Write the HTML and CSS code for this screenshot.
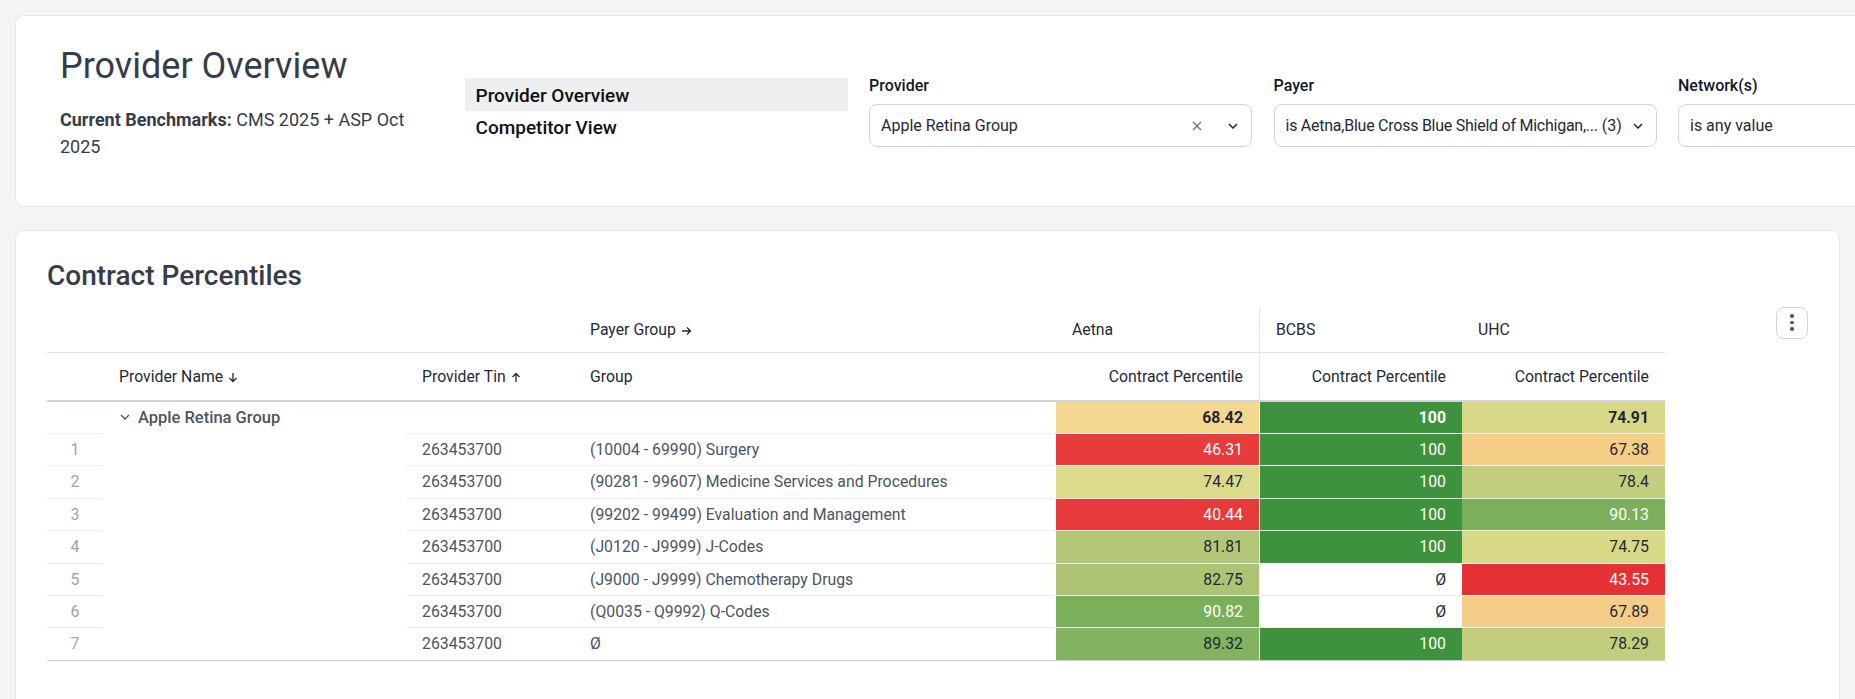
FILE: index.html
```html
<!DOCTYPE html>
<html lang="en">
<head>
    <meta charset="UTF-8">
    <meta name="viewport" content="width=device-width, initial-scale=1.0">
    <title>Provider Overview</title>
    <link rel="stylesheet" href="styles.css">
</head>
<body>
<div class="page">
    <section class="card top-card">
        <div class="top-grid">
            <div class="intro">
                <h1>Provider Overview</h1>
                <p class="benchmarks"><strong>Current Benchmarks:</strong> <span>CMS 2025 + ASP Oct</span> <span>2025</span></p>
            </div>

            <nav class="views">
                <a href="#" class="active">Provider Overview</a>
                <a href="#">Competitor View</a>
            </nav>

            <div class="filter">
                <label>Provider</label>
                <div class="select">
                    <span class="value">Apple Retina Group</span>
                    <svg class="clear" width="10" height="10" viewBox="0 0 10 10"><path d="M1 1L9 9M9 1L1 9" stroke="#6b7280" stroke-width="1.3" fill="none"/></svg>
                    <svg class="caret" width="10" height="6" viewBox="0 0 10 6"><path d="M1 1L5 5L9 1" stroke="#1f2937" stroke-width="1.5" fill="none"/></svg>
                </div>
            </div>

            <div class="filter">
                <label>Payer</label>
                <div class="select">
                    <span class="value tight">is Aetna,Blue Cross Blue Shield of Michigan,...</span>
                    <span class="count">(3)</span>
                    <svg class="caret" width="10" height="6" viewBox="0 0 10 6"><path d="M1 1L5 5L9 1" stroke="#1f2937" stroke-width="1.5" fill="none"/></svg>
                </div>
            </div>

            <div class="filter">
                <label>Network(s)</label>
                <div class="select">
                    <span class="value">is any value</span>
                </div>
            </div>
        </div>
    </section>

    <section class="card percentiles">
        <h2>Contract Percentiles</h2>
        <div class="table-wrap">
            <table class="pivot">
                <colgroup>
                    <col style="width:56px">
                    <col style="width:303px">
                    <col style="width:168px">
                    <col style="width:482px">
                    <col style="width:203px">
                    <col style="width:203px">
                    <col style="width:203px">
                </colgroup>
                <thead>
                    <tr class="pivot-row">
                        <th></th>
                        <th></th>
                        <th></th>
                        <th>Payer Group <svg class="arrow" width="11" height="10" viewBox="0 0 11 10"><path d="M1 5H9.5M6 1.5L9.5 5L6 8.5" stroke="#1f2937" stroke-width="1.3" fill="none"/></svg></th>
                        <th>Aetna</th>
                        <th class="split">BCBS</th>
                        <th>UHC</th>
                    </tr>
                    <tr class="field-row">
                        <th></th>
                        <th>Provider Name <svg class="arrow" width="10" height="11" viewBox="0 0 10 11"><path d="M5 1V9.5M1.5 6L5 9.5L8.5 6" stroke="#1f2937" stroke-width="1.3" fill="none"/></svg></th>
                        <th>Provider Tin <svg class="arrow" width="10" height="11" viewBox="0 0 10 11"><path d="M5 10V1.5M1.5 5L5 1.5L8.5 5" stroke="#1f2937" stroke-width="1.3" fill="none"/></svg></th>
                        <th>Group</th>
                        <th class="num">Contract Percentile</th>
                        <th class="num split">Contract Percentile</th>
                        <th class="num">Contract Percentile</th>
                    </tr>
                </thead>
                <tbody>
                    <tr class="group-row">
                        <td class="idx"></td>
                        <td class="name" rowspan="8"><svg class="chev" width="10" height="6" viewBox="0 0 10 6"><path d="M1 1L5 5L9 1" stroke="#4b5563" stroke-width="1.4" fill="none"/></svg>Apple Retina Group</td>
                        <td></td>
                        <td></td>
                        <td class="num" style="background:#f5d88f">68.42</td>
                        <td class="num split light" style="background:#3e923d">100</td>
                        <td class="num" style="background:#d8d886">74.91</td>
                    </tr>
                    <tr>
                        <td class="idx">1</td>
                        <td>263453700</td>
                        <td>(10004 - 69990) Surgery</td>
                        <td class="num light" style="background:#e83b3c">46.31</td>
                        <td class="num split light" style="background:#3e923d">100</td>
                        <td class="num" style="background:#f4cd86">67.38</td>
                    </tr>
                    <tr>
                        <td class="idx">2</td>
                        <td>263453700</td>
                        <td>(90281 - 99607) Medicine Services and Procedures</td>
                        <td class="num" style="background:#dcdb8c">74.47</td>
                        <td class="num split light" style="background:#3e923d">100</td>
                        <td class="num" style="background:#c3cf7f">78.4</td>
                    </tr>
                    <tr>
                        <td class="idx">3</td>
                        <td>263453700</td>
                        <td>(99202 - 99499) Evaluation and Management</td>
                        <td class="num light" style="background:#e73a3b">40.44</td>
                        <td class="num split light" style="background:#3e923d">100</td>
                        <td class="num light" style="background:#7caf5c">90.13</td>
                    </tr>
                    <tr>
                        <td class="idx">4</td>
                        <td>263453700</td>
                        <td>(J0120 - J9999) J-Codes</td>
                        <td class="num" style="background:#b3c778">81.81</td>
                        <td class="num split light" style="background:#3e923d">100</td>
                        <td class="num" style="background:#d8d986">74.75</td>
                    </tr>
                    <tr>
                        <td class="idx">5</td>
                        <td>263453700</td>
                        <td>(J9000 - J9999) Chemotherapy Drugs</td>
                        <td class="num" style="background:#aec475">82.75</td>
                        <td class="num split">Ø</td>
                        <td class="num light" style="background:#e53134">43.55</td>
                    </tr>
                    <tr>
                        <td class="idx">6</td>
                        <td>263453700</td>
                        <td>(Q0035 - Q9992) Q-Codes</td>
                        <td class="num light" style="background:#7bb05b">90.82</td>
                        <td class="num split">Ø</td>
                        <td class="num" style="background:#f4ce88">67.89</td>
                    </tr>
                    <tr>
                        <td class="idx">7</td>
                        <td>263453700</td>
                        <td>Ø</td>
                        <td class="num" style="background:#83b260">89.32</td>
                        <td class="num split light" style="background:#3e923d">100</td>
                        <td class="num" style="background:#c2ce7e">78.29</td>
                    </tr>
                </tbody>
            </table>
            <button class="more" type="button"><span></span><span></span><span></span></button>
        </div>
    </section>
</div>
</body>
</html>
```

FILE: styles.css
```css
body {
    margin: 0;
    font-family: Roboto, 'Noto Sans', sans-serif;
    background-color: #f3f4f6;
    color: #374151;
}

.page {
    padding: 15px;
    overflow: hidden;
}

.card {
    background: #fff;
    border: 1px solid #e5e7eb;
    border-radius: 8px;
}

/* header card */

.top-card {
    width: max-content;
    height: 192px;
    box-sizing: border-box;
    padding: 27px 44px 0 44px;
}

.top-grid {
    display: grid;
    grid-template-columns: repeat(5, 383px);
    column-gap: 21.5px;
}

.intro h1 {
    margin: 2px 0 0;
    font-size: 36px;
    line-height: 43px;
    font-weight: 400;
    color: #363c48;
}

.benchmarks {
    margin: 18px 0 0;
    font-size: 18px;
    line-height: 27px;
    color: #363c48;
}

.benchmarks strong {
    font-weight: 700;
}

.views {
    margin-top: 35px;
    display: flex;
    flex-direction: column;
}

.views a {
    display: block;
    padding: 6.5px 11px 3.5px;
    line-height: 22.5px;
    font-size: 19px;
    font-weight: 500;
    color: #111;
    text-decoration: none;
}

.views a.active {
    background: #eeeff1;
}

.filter {
    margin-top: 33px;
}

.filter label {
    display: block;
    font-size: 16px;
    line-height: 19px;
    font-weight: 500;
    color: #111827;
    margin-bottom: 9px;
}

.select {
    display: flex;
    align-items: center;
    height: 43px;
    box-sizing: border-box;
    border: 1px solid #d1d5db;
    border-radius: 8px;
    padding: 0 13px 0 11px;
    font-size: 16px;
    color: #1f2937;
}

.select .value {
    flex: 1;
    white-space: nowrap;
    overflow: hidden;
}

.select .value.tight {
    flex: none;
    letter-spacing: -0.25px;
    overflow: visible;
}

.select .count {
    margin-left: 4px;
    white-space: nowrap;
}

.select .count + .caret {
    margin-left: auto;
}

.select .clear {
    margin-right: 26px;
}

/* percentiles card */

.percentiles {
    margin-top: 23px;
    padding: 27.5px 31px 60px 31px;
}

.percentiles h2 {
    margin: 0 0 14px;
    font-size: 28px;
    line-height: 34px;
    font-weight: 500;
    color: #363c48;
}

.table-wrap {
    display: flex;
    align-items: flex-start;
}

.pivot {
    width: 1618px;
    table-layout: fixed;
    border-collapse: separate;
    border-spacing: 0;
    font-size: 15.8px;
}

.pivot th, .pivot td {
    padding: 0 16px;
    text-align: left;
    white-space: nowrap;
    overflow: hidden;
}

.pivot th {
    font-weight: 400;
    color: #1f2937;
}

.pivot-row th {
    line-height: 45px;
    border-bottom: 1px solid #e5e7eb;
}

.field-row th {
    line-height: 47px;
    border-bottom: 2px solid #d1d5db;
}

.pivot th.split {
    border-left: 1px solid #e5e7eb;
}

.pivot .arrow {
    vertical-align: -1px;
    margin-left: 1px;
}

.pivot td {
    line-height: 31.4px;
    border-bottom: 1px solid #eceef1;
    color: #4b5563;
}

.pivot tbody tr:last-child td, .pivot td.name {
    border-bottom-color: #c9cdd3;
}

.pivot td.split {
    border-left: 1px solid #eef0f2;
}

.pivot td.idx {
    text-align: center;
    color: #9ca3af;
    padding: 0;
}

.pivot td.name {
    vertical-align: top;
    font-size: 16.5px;
    font-weight: 500;
    color: #4b5563;
}

.pivot .chev {
    margin: 0 8px 0 1px;
    vertical-align: 3px;
}

.pivot .num {
    text-align: right;
}

.pivot td.num {
    color: #1f2937;
}

.pivot td.light {
    color: #fff;
}

.group-row td.num {
    font-weight: 700;
}

.more {
    margin-left: auto;
    width: 32px;
    height: 32px;
    padding: 0;
    border: 1px solid #d1d5db;
    border-radius: 8px;
    background: #fff;
    display: flex;
    flex-direction: column;
    align-items: center;
    justify-content: center;
    gap: 3px;
    cursor: pointer;
}

.more span {
    width: 3.5px;
    height: 3.5px;
    border-radius: 50%;
    background: #4b5563;
}
```
